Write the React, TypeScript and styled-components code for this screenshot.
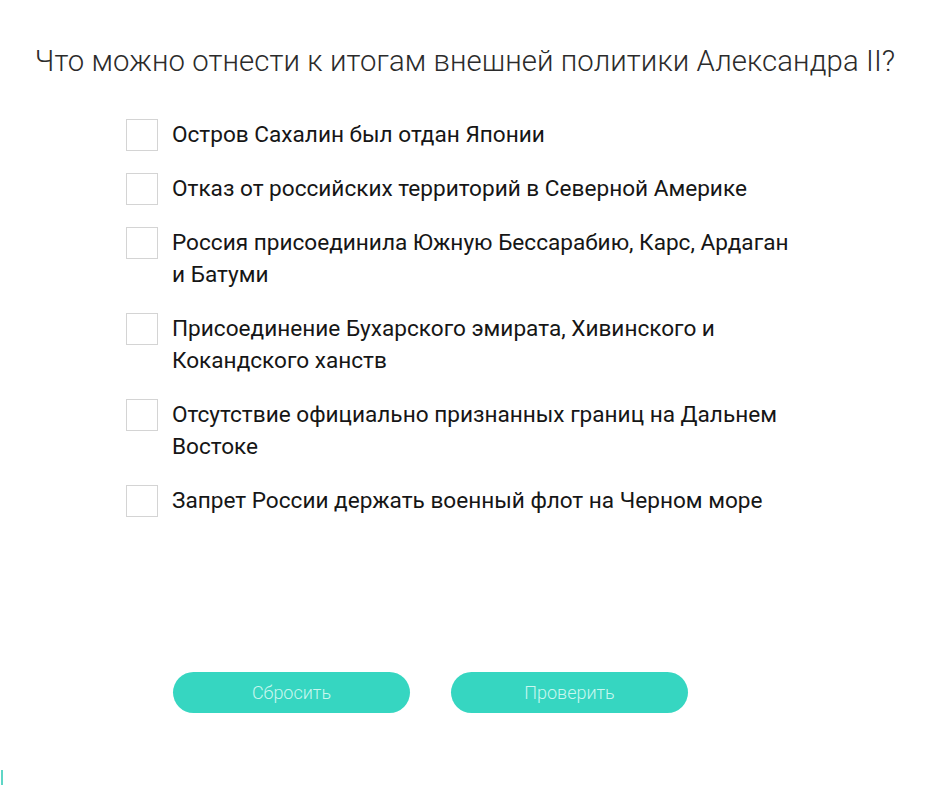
import styled, { createGlobalStyle } from 'styled-components';

const GlobalStyle = createGlobalStyle`
	html, body {
		margin: 0;
		padding: 0;
		background: #ffffff;
	}
	body {
		font-family: 'Roboto', 'Liberation Sans', sans-serif;
		color: #1a1a1a;
	}
`;

const options = [
	'Остров Сахалин был отдан Японии',
	'Отказ от российских территорий в Северной Америке',
	'Россия присоединила Южную Бессарабию, Карс, Ардаган и Батуми',
	'Присоединение Бухарского эмирата, Хивинского и Кокандского ханств',
	'Отсутствие официально признанных границ на Дальнем Востоке',
	'Запрет России держать военный флот на Черном море',
];

export default function App() {
	return (
		<>
			<GlobalStyle />
			<Page>
				<Question>Что можно отнести к итогам внешней политики Александра II?</Question>
				<OptionList>
					{options.map((text) => (
						<Option key={text}>
							<CheckBox type='checkbox' />
							<OptionText>{text}</OptionText>
						</Option>
					))}
				</OptionList>
				<Actions>
					<ActionButton>Сбросить</ActionButton>
					<ActionButton>Проверить</ActionButton>
				</Actions>
				<CornerMark />
			</Page>
		</>
	);
}

const Page = styled.div`
	position: relative;
	width: 948px;
	height: 788px;
	padding-top: 44px;
	box-sizing: border-box;
	overflow: hidden;
`;

const Question = styled.h1`
	margin: 0;
	padding-right: 18px;
	text-align: center;
	font-family: 'Roboto', sans-serif;
	font-weight: 300;
	font-size: 29.3px;
	line-height: 34px;
	color: #2b2b2b;
	letter-spacing: 0.1px;
`;

const OptionList = styled.ul`
	list-style: none;
	margin: 41px 0 0;
	padding: 0 0 0 126px;
	display: flex;
	flex-direction: column;
	gap: 22px;
`;

const Option = styled.li`
	display: flex;
	align-items: flex-start;
	gap: 14px;
`;

const CheckBox = styled.input`
	appearance: none;
	margin: 0;
	flex: none;
	width: 32px;
	height: 32px;
	border: 1px solid #d4d4d4;
	background: #fff;
	box-sizing: border-box;
	cursor: pointer;

	&:checked {
		background: #35d6c0;
		border-color: #35d6c0;
	}
`;

const OptionText = styled.span`
	max-width: 630px;
	font-family: 'Roboto', sans-serif;
	font-size: 22.6px;
	line-height: 32px;
	color: #161616;
`;

const Actions = styled.div`
	display: flex;
	gap: 41px;
	margin-top: 155px;
	padding-left: 173px;
`;

const ActionButton = styled.button`
	width: 237px;
	height: 41px;
	border: none;
	border-radius: 21px;
	background: #36d6c1;
	color: #c9f6ef;
	font-family: 'Roboto', sans-serif;
	font-weight: 300;
	font-size: 18px;
	cursor: pointer;
`;

const CornerMark = styled.span`
	position: absolute;
	left: 1px;
	top: 770px;
	width: 2px;
	height: 15px;
	background: #5fd6c6;
`;
